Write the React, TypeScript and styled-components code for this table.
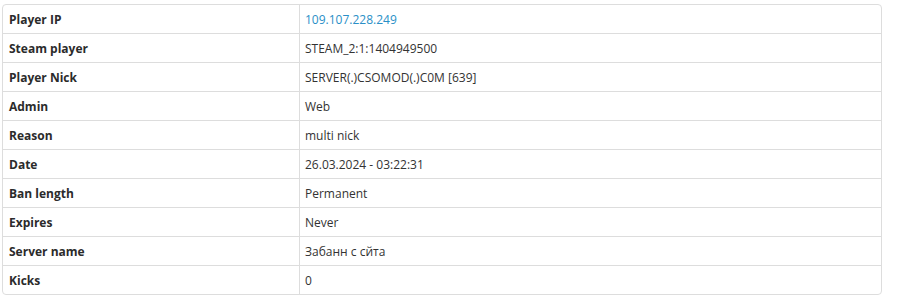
import React from "react";
import styled, { createGlobalStyle } from "styled-components";

const Global = createGlobalStyle`
  html, body { margin: 0; padding: 0; background: #fff; }
  body { font-family: "Open Sans", "Liberation Sans", sans-serif; }
`;

const Wrap = styled.div`
  padding: 4px 0 0 2px;
`;

const Table = styled.table`
  width: 880px;
  border-collapse: separate;
  border-spacing: 0;
  border: 1px solid #dddddd;
  border-radius: 4px;
  font-size: 12px;
  color: #333333;
  table-layout: fixed;
`;

const Row = styled.tr`
  &:not(:last-child) > td {
    border-bottom: 1px solid #dddddd;
  }
`;

const Label = styled.td`
  width: 297px;
  height: 28px;
  padding: 0 6px;
  box-sizing: border-box;
  font-weight: 700;
  color: #2b2b2b;
  border-right: 1px solid #dddddd;
  vertical-align: middle;
`;

const Value = styled.td`
  height: 28px;
  padding: 0 5px;
  vertical-align: middle;
`;

const Link = styled.a`
  color: #2a8fc7;
  text-decoration: none;
`;

const rows: [string, React.ReactNode][] = [
  ["Player IP", <Link href="#">109.107.228.249</Link>],
  ["Steam player", "STEAM_2:1:1404949500"],
  ["Player Nick", "SERVER(.)CSOMOD(.)C0M [639]"],
  ["Admin", "Web"],
  ["Reason", "multi nick"],
  ["Date", "26.03.2024 - 03:22:31"],
  ["Ban length", "Permanent"],
  ["Expires", "Never"],
  ["Server name", "Забанн с сйта"],
  ["Kicks", "0"],
];

export default function App() {
  return (
    <>
      <Global />
      <Wrap>
        <Table>
          <tbody>
            {rows.map(([k, v]) => (
              <Row key={k}>
                <Label>{k}</Label>
                <Value>{v}</Value>
              </Row>
            ))}
          </tbody>
        </Table>
      </Wrap>
    </>
  );
}
